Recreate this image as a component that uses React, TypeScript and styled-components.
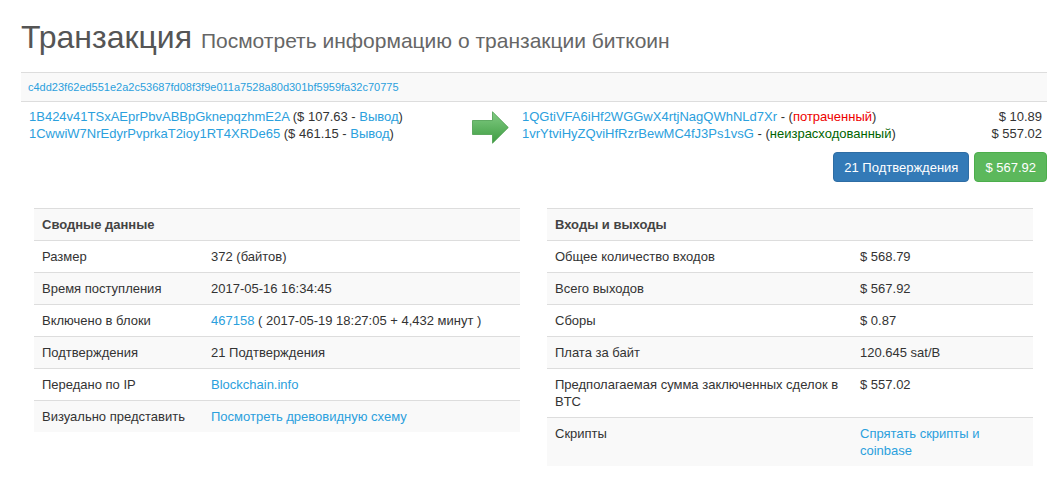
import React, { FC } from 'react';
import styled, { createGlobalStyle } from 'styled-components';

const GlobalStyle = createGlobalStyle`
  body {
    margin: 0;
    background: #fff;
    font-family: 'Liberation Sans', Arial, Helvetica, sans-serif;
    font-size: 13px;
    color: #333;
  }
`;

const LINK = '#2ba0dd';

const Link = styled.a`
  color: ${LINK};
  text-decoration: none;
  cursor: pointer;
`;

type Row = { label: string; value: React.ReactNode };

const summaryRows: Row[] = [
  { label: 'Размер', value: '372 (байтов)' },
  { label: 'Время поступления', value: '2017-05-16 16:34:45' },
  {
    label: 'Включено в блоки',
    value: (
      <>
        <Link>467158</Link>
        {' ( 2017-05-19 18:27:05 + 4,432 минут )'}
      </>
    ),
  },
  { label: 'Подтверждения', value: '21 Подтверждения' },
  { label: 'Передано по IP', value: <Link>Blockchain.info</Link> },
  { label: 'Визуально представить', value: <Link>Посмотреть древовидную схему</Link> },
];

const ioRows: Row[] = [
  { label: 'Общее количество входов', value: '$ 568.79' },
  { label: 'Всего выходов', value: '$ 567.92' },
  { label: 'Сборы', value: '$ 0.87' },
  { label: 'Плата за байт', value: '120.645 sat/B' },
  { label: 'Предполагаемая сумма заключенных сделок в BTC', value: '$ 557.02' },
  { label: 'Скрипты', value: <Link>Спрятать скрипты и coinbase</Link> },
];

const inputs = [
  { addr: '1B424v41TSxAEprPbvABBpGknepqzhmE2A', amount: '$ 107.63' },
  { addr: '1CwwiW7NrEdyrPvprkaT2ioy1RT4XRDe65', amount: '$ 461.15' },
];

const outputs = [
  { addr: '1QGtiVFA6iHf2WGGwX4rtjNagQWhNLd7Xr', spent: true, amount: '$ 10.89' },
  { addr: '1vrYtviHyZQviHfRzrBewMC4fJ3Ps1vsG', spent: false, amount: '$ 557.02' },
];

const Arrow = () => (
  <svg width="37" height="33" viewBox="0 0 37 33">
    <defs>
      <linearGradient id="arrowFill" x1="0" y1="0" x2="0" y2="1">
        <stop offset="0" stopColor="#82cc84" />
        <stop offset="1" stopColor="#3e9c41" />
      </linearGradient>
    </defs>
    <path
      d="M0.5 9.5 H20.5 V0.8 L36.3 16.5 L20.5 32.2 V23.5 H0.5 Z"
      fill="url(#arrowFill)"
      stroke="#4a9d4c"
      strokeWidth="0.8"
    />
  </svg>
);

const InfoTable: FC<{ title: string; rows: Row[]; labelWidth: number }> = ({ title, rows, labelWidth }) => (
  <Table>
    <colgroup>
      <col style={{ width: labelWidth }} />
      <col />
    </colgroup>
    <tbody>
      <tr>
        <HeadCell colSpan={2}>{title}</HeadCell>
      </tr>
      {rows.map((row) => (
        <tr key={row.label}>
          <Cell>{row.label}</Cell>
          <Cell>{row.value}</Cell>
        </tr>
      ))}
    </tbody>
  </Table>
);

const App = () => (
  <Page>
    <GlobalStyle />
    <Title>
      Транзакция
      {' '}
      <Subtitle>Посмотреть информацию о транзакции биткоин</Subtitle>
    </Title>

    <HashBar>
      <Link>c4dd23f62ed551e2a2c53687fd08f3f9e011a7528a80d301bf5959fa32c70775</Link>
    </HashBar>

    <TxGrid>
      <Column>
        {inputs.map((i) => (
          <Line key={i.addr}>
            <Link>{i.addr}</Link>
            {` (${i.amount} - `}
            <Link>Вывод</Link>
            )
          </Line>
        ))}
      </Column>
      <ArrowCell>
        <Arrow />
      </ArrowCell>
      <OutColumn>
        {outputs.map((o) => (
          <OutLine key={o.addr}>
            <span>
              <Link>{o.addr}</Link>
              {' - ('}
              <Status $spent={o.spent}>{o.spent ? 'потраченный' : 'неизрасходованный'}</Status>
              )
            </span>
            <span>{o.amount}</span>
          </OutLine>
        ))}
      </OutColumn>
    </TxGrid>

    <Buttons>
      <Button $variant="primary">21 Подтверждения</Button>
      <Button $variant="success">$ 567.92</Button>
    </Buttons>

    <Tables>
      <InfoTable title="Сводные данные" rows={summaryRows} labelWidth={169} />
      <InfoTable title="Входы и выходы" rows={ioRows} labelWidth={305} />
    </Tables>
  </Page>
);

const Page = styled.div`
  padding: 0 13px 0 21px;
`;

const Title = styled.h1`
  margin: 20px 0 14px;
  font-size: 32px;
  line-height: 35px;
  font-weight: normal;
  color: #555;
`;

const Subtitle = styled.small`
  font-size: 21px;
  color: #666;
`;

const HashBar = styled.div`
  display: flex;
  align-items: center;
  height: 28px;
  padding: 0 7px;
  border-top: 1px solid #ddd;
  border-bottom: 1px solid #ddd;
  background: #f9f9f9;
  font-size: 11px;
`;

const TxGrid = styled.div`
  display: grid;
  grid-template-columns: 445px 48px 1fr;
  padding-top: 6px;
`;

const Column = styled.div`
  display: flex;
  flex-direction: column;
  padding-left: 8px;
`;

const Line = styled.div`
  line-height: 17px;
  white-space: nowrap;
`;

const ArrowCell = styled.div`
  display: flex;
  justify-content: center;
  padding-top: 3px;
`;

const OutColumn = styled(Column)`
  padding-right: 5px;
`;

const OutLine = styled(Line)`
  display: flex;
  justify-content: space-between;
`;

const Status = styled.span<{ $spent: boolean }>`
  color: ${(p) => (p.$spent ? '#e00' : '#006400')};
`;

const Buttons = styled.div`
  display: flex;
  justify-content: flex-end;
  gap: 5px;
  margin-top: 8px;
`;

const Button = styled.button<{ $variant: 'primary' | 'success' }>`
  height: 30px;
  padding: 0 10px;
  border: 1px solid ${(p) => (p.$variant === 'primary' ? '#2e6da4' : '#4cae4c')};
  border-radius: 4px;
  background: ${(p) => (p.$variant === 'primary' ? '#337ab7' : '#5cb85c')};
  color: #fff;
  font-family: inherit;
  font-size: 13px;
  cursor: pointer;
`;

const Tables = styled.div`
  display: grid;
  grid-template-columns: 1fr 1fr;
  gap: 27px;
  padding: 0 14px 0 13px;
  margin-top: 26px;
  align-items: start;
`;

const Table = styled.table`
  width: 100%;
  table-layout: fixed;
  border-collapse: collapse;

  tr:nth-child(odd) {
    background: #f9f9f9;
  }
`;

const Cell = styled.td`
  padding: 7px 8px;
  line-height: 17px;
  border-top: 1px solid #ddd;
  vertical-align: top;
  color: #333;
`;

const HeadCell = styled(Cell)`
  font-weight: bold;
  color: #444;
`;

export default App;
